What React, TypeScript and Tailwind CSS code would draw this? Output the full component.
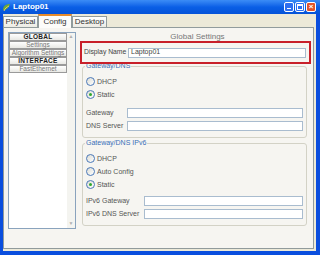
import React from "react";

const sans = "font-['Liberation_Sans',Arial,sans-serif]";

function Radio({ checked }: { checked?: boolean }) {
  return (
    <span className="w-[9px] h-[9px] rounded-full border border-[#4a78b8] bg-linear-to-br from-[#dcdcd4] to-white flex items-center justify-center shrink-0">
      {checked && <span className="w-[3px] h-[3px] rounded-full bg-[#2ca82c]" />}
    </span>
  );
}

function RadioRow({ label, checked }: { label: string; checked?: boolean }) {
  return (
    <div className="h-[13px] flex items-center gap-[2px] pl-[3px]">
      <Radio checked={checked} />
      <span className="text-[7px] leading-[8px] text-[#555]">{label}</span>
    </div>
  );
}

function FieldRow({ label, labelWidth }: { label: string; labelWidth: string }) {
  return (
    <div className="h-[13px] flex items-center pl-[3px] pr-[3px]">
      <span className={`${labelWidth} shrink-0 text-[7px] leading-[8px] text-[#555]`}>{label}</span>
      <div className="flex-1 h-[10px] border border-[#a9bccf] bg-white" />
    </div>
  );
}

function Tab({ label, active }: { label: string; active?: boolean }) {
  if (active) {
    return (
      <div className="relative z-10 -mb-px h-[14px] w-[34px] border-x border-[#919b9c] border-t-2 border-t-[#e68b2c] bg-[#fcfcfa] flex items-center justify-center text-[8px] text-[#333]">
        {label}
      </div>
    );
  }
  return (
    <div className="h-[11px] w-[35px] border border-b-0 border-[#919b9c] bg-linear-to-b from-white to-[#ecebe4] flex items-center justify-center text-[8px] text-[#333]">
      {label}
    </div>
  );
}

function SideButton({ label, bold }: { label: string; bold?: boolean }) {
  return (
    <div
      className={`h-[8px] border border-[#9a9a9a] bg-linear-to-b from-white to-[#e8e8e4] flex items-center justify-center text-[6.5px] leading-[6px] ${
        bold ? "font-bold text-[#222] tracking-[0.3px]" : "text-[#777]"
      }`}
    >
      {label}
    </div>
  );
}

export default function App() {
  return (
    <div className={`${sans} w-[320px] h-[255px] bg-[#0a4ede] flex flex-col overflow-hidden`}>
      {/* Title bar */}
      <div className="h-[14px] shrink-0 bg-linear-to-b from-[#3b8cf6] via-[#0a5fe6] to-[#0653d8] flex items-center pl-[2px] pr-[4px]">
        <svg width="9" height="9" viewBox="0 0 9 9">
          <path d="M1 7 C1 3 4 1 8 1 C7 4 5 7 1 7Z" fill="#6aa83a" />
          <path d="M2 8 C3 5 5 4 7 3" stroke="#e8d060" strokeWidth="1" fill="none" />
        </svg>
        <span className="ml-[2px] text-[8px] font-bold text-white leading-none">Laptop01</span>
        <div className="ml-auto flex gap-[1px]">
          <div className="w-[10px] h-[10px] rounded-[2px] border border-white bg-[#2e6ff0] flex items-end justify-center pb-[2px]">
            <div className="w-[4px] h-[1.5px] bg-white" />
          </div>
          <div className="w-[10px] h-[10px] rounded-[2px] border border-white bg-[#2e6ff0] flex items-center justify-center">
            <div className="w-[6px] h-[6px] border border-white border-t-2" />
          </div>
          <div className="w-[10px] h-[10px] rounded-[2px] border border-white bg-[#e2542a] flex items-center justify-center text-white text-[8px] font-bold leading-none">
            ×
          </div>
        </div>
      </div>

      {/* Body */}
      <div className="flex-1 ml-[3px] mr-[4px] mb-[4px] bg-[#ece9d8] flex flex-col">
        <div className="h-[13px] flex items-end">
          <Tab label="Physical" />
          <Tab label="Config" active />
          <Tab label="Desktop" />
        </div>
        <div className="h-[222px] border border-[#919b9c] bg-[#f6f5f1] mr-[2px] flex pt-[4px] pl-[4px] pr-[2px]">
          {/* Sidebar */}
          <div className="w-[68px] h-[197px] border border-[#8aa3bd] bg-white flex">
            <div className="flex-1 flex flex-col">
              <SideButton label="GLOBAL" bold />
              <SideButton label="Settings" />
              <SideButton label="Algorithm Settings" />
              <SideButton label="INTERFACE" bold />
              <SideButton label="FastEthernet" />
            </div>
            <div className="w-[8px] bg-[#f4f4f0] flex flex-col justify-between">
              <div className="h-[8px] flex items-center justify-center text-[5px] text-[#b0b0b0]">▲</div>
              <div className="h-[8px] flex items-center justify-center text-[5px] text-[#b0b0b0]">▼</div>
            </div>
          </div>

          {/* Settings */}
          <div className="ml-[4px] w-[231px] flex flex-col">
            <div className="mt-[1px] h-[8px] text-center text-[8px] leading-[8px] text-[#777] pl-[4px]">Global Settings</div>
            <div className="relative z-10 h-[23px] border-2 border-[#c8202a] flex items-center pl-[2px] pr-[3px]">
              <span className="w-[44px] shrink-0 text-[6.8px] text-[#444]">Display Name</span>
              <div className="flex-1 h-[10px] border border-[#a9bccf] bg-white flex items-center pl-[2px] text-[7px] text-[#444]">
                Laptop01
              </div>
            </div>

            <fieldset className="-mt-[2px] ml-[2px] mr-[4px] h-[76px] border border-[#d3d2c6] rounded-[3px] px-0 pb-[5px]">
              <legend className="ml-[2px] px-[1px] text-[7px] leading-[8px] text-[#3a6fb8]">Gateway/DNS</legend>
              <div className="pt-[5px]">
                <RadioRow label="DHCP" />
                <RadioRow label="Static" checked />
                <div className="mt-[5px]">
                  <FieldRow label="Gateway" labelWidth="w-[41px]" />
                  <FieldRow label="DNS Server" labelWidth="w-[41px]" />
                </div>
              </div>
            </fieldset>

            <fieldset className="mt-[1px] ml-[2px] mr-[4px] h-[87px] border border-[#d3d2c6] rounded-[3px] px-0">
              <legend className="ml-[2px] px-[1px] text-[7px] leading-[8px] text-[#3a6fb8]">Gateway/DNS IPv6</legend>
              <div className="pt-[5px]">
                <RadioRow label="DHCP" />
                <RadioRow label="Auto Config" />
                <RadioRow label="Static" checked />
                <div className="mt-[3px]">
                  <FieldRow label="IPv6 Gateway" labelWidth="w-[58px]" />
                  <FieldRow label="IPv6 DNS Server" labelWidth="w-[58px]" />
                </div>
              </div>
            </fieldset>
          </div>
        </div>
      </div>
    </div>
  );
}
